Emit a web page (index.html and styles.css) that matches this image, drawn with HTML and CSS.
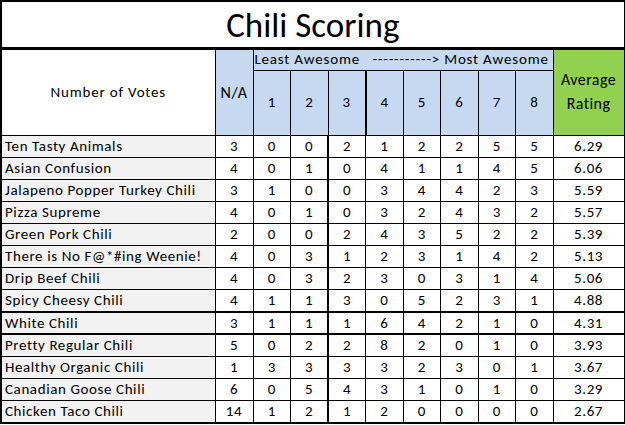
FILE: index.html
```html
<!DOCTYPE html>
<html>
<head>
<meta charset="utf-8">
<link rel="stylesheet" href="styles.css">
</head>
<body>
<table class="sheet">
  <colgroup>
    <col class="c-name"><col class="c-na">
    <col class="c-n"><col class="c-n"><col class="c-n"><col class="c-n">
    <col class="c-n"><col class="c-n"><col class="c-n"><col class="c-n">
    <col class="c-avg">
  </colgroup>
  <tr class="title-row"><td colspan="11" class="title">Chili Scoring</td></tr>
  <tr class="head1">
    <th rowspan="2" class="label">Number of Votes</th>
    <th rowspan="2" class="na">N/A</th>
    <th colspan="8" class="scale">Least Awesome&nbsp;&nbsp; -----------&gt; Most Awesome</th>
    <th rowspan="2" class="avg">Average<br>Rating</th>
  </tr>
  <tr class="head2">
    <th class="num">1</th><th class="num">2</th><th class="num thick">3</th><th class="num">4</th>
    <th class="num">5</th><th class="num">6</th><th class="num">7</th><th class="num">8</th>
  </tr>
  <tr><td class="name">Ten Tasty Animals</td><td>3</td><td>0</td><td>0</td><td class="thick">2</td><td>1</td><td>2</td><td>2</td><td>5</td><td>5</td><td>6.29</td></tr>
  <tr><td class="name">Asian Confusion</td><td>4</td><td>0</td><td>1</td><td class="thick">0</td><td>4</td><td>1</td><td>1</td><td>4</td><td>5</td><td>6.06</td></tr>
  <tr><td class="name">Jalapeno Popper Turkey Chili</td><td>3</td><td>1</td><td>0</td><td class="thick">0</td><td>3</td><td>4</td><td>4</td><td>2</td><td>3</td><td>5.59</td></tr>
  <tr><td class="name">Pizza Supreme</td><td>4</td><td>0</td><td>1</td><td class="thick">0</td><td>3</td><td>2</td><td>4</td><td>3</td><td>2</td><td>5.57</td></tr>
  <tr><td class="name">Green Pork Chili</td><td>2</td><td>0</td><td>0</td><td class="thick">2</td><td>4</td><td>3</td><td>5</td><td>2</td><td>2</td><td>5.39</td></tr>
  <tr><td class="name">There is No F@*#ing Weenie!</td><td>4</td><td>0</td><td>3</td><td class="thick">1</td><td>2</td><td>3</td><td>1</td><td>4</td><td>2</td><td>5.13</td></tr>
  <tr><td class="name">Drip Beef Chili</td><td>4</td><td>0</td><td>3</td><td class="thick">2</td><td>3</td><td>0</td><td>3</td><td>1</td><td>4</td><td>5.06</td></tr>
  <tr class="sep"><td class="name">Spicy Cheesy Chili</td><td>4</td><td>1</td><td>1</td><td class="thick">3</td><td>0</td><td>5</td><td>2</td><td>3</td><td>1</td><td>4.88</td></tr>
  <tr class="sep"><td class="name">White Chili</td><td>3</td><td>1</td><td>1</td><td class="thick">1</td><td>6</td><td>4</td><td>2</td><td>1</td><td>0</td><td>4.31</td></tr>
  <tr><td class="name">Pretty Regular Chili</td><td>5</td><td>0</td><td>2</td><td class="thick">2</td><td>8</td><td>2</td><td>0</td><td>1</td><td>0</td><td>3.93</td></tr>
  <tr><td class="name">Healthy Organic Chili</td><td>1</td><td>3</td><td>3</td><td class="thick">3</td><td>3</td><td>2</td><td>3</td><td>0</td><td>1</td><td>3.67</td></tr>
  <tr><td class="name">Canadian Goose Chili</td><td>6</td><td>0</td><td>5</td><td class="thick">4</td><td>3</td><td>1</td><td>0</td><td>1</td><td>0</td><td>3.29</td></tr>
  <tr class="last"><td class="name">Chicken Taco Chili</td><td>14</td><td>1</td><td>2</td><td class="thick">1</td><td>2</td><td>0</td><td>0</td><td>0</td><td>0</td><td>2.67</td></tr>
</table>
</body>
</html>
```
FILE: styles.css
```css
html, body {
  margin: 0;
  padding: 0;
  background: #ffffff;
}
.sheet {
  border-collapse: collapse;
  table-layout: fixed;
  width: 623px;
  font-family: "Carlito", "Lato", sans-serif;
  font-size: 15px;
  letter-spacing: 0.6px;
  color: #000;
}
.c-name { width: 214px; }
.c-na { width: 38px; }
.c-n { width: 37.5px; }
.c-avg { width: 71px; }
.sheet td, .sheet th {
  border: 1px solid #000;
  padding: 0;
  text-align: center;
  vertical-align: middle;
  font-weight: normal;
  line-height: 17px;
  white-space: nowrap;
  overflow: hidden;
}
.sheet tr { height: 22.15px; }
.sheet .title-row { height: 47px; }
.sheet .title {
  font-size: 35px;
  letter-spacing: 0;
  line-height: 40px;
  border-top: 2px solid #000;
  border-bottom: 3px solid #000;
  padding-top: 2px;
}
.sheet .head1 { height: 22px; }
.sheet .head2 { height: 65px; }
.sheet .label { background: #fff; letter-spacing: 0.8px; }
.sheet .na, .sheet .scale, .sheet .num { background: #c6d9f1; }
.sheet .na { font-size: 16px; }
.sheet .scale { text-align: left; padding-left: 1px; letter-spacing: 0.8px; }
.sheet .avg { background: #92d050; line-height: 24px; font-size: 16px; letter-spacing: 0.4px; }
.sheet .name {
  background: #f2f2f2;
  text-align: left;
  padding-left: 3px;
}
.sheet .thick { border-left: 2px solid #000; }
.sheet th.thick { border-left: 1px solid #000; border-right: 2px solid #000; }
.sheet .sep td { border-bottom: 2px solid #000; }
.sheet .last td { border-bottom: 2px solid #000; }
.sheet td:first-child, .sheet th:first-child { border-left: 2px solid #000; }
.sheet .head2 th:first-child { border-left: 1px solid #000; }
```
